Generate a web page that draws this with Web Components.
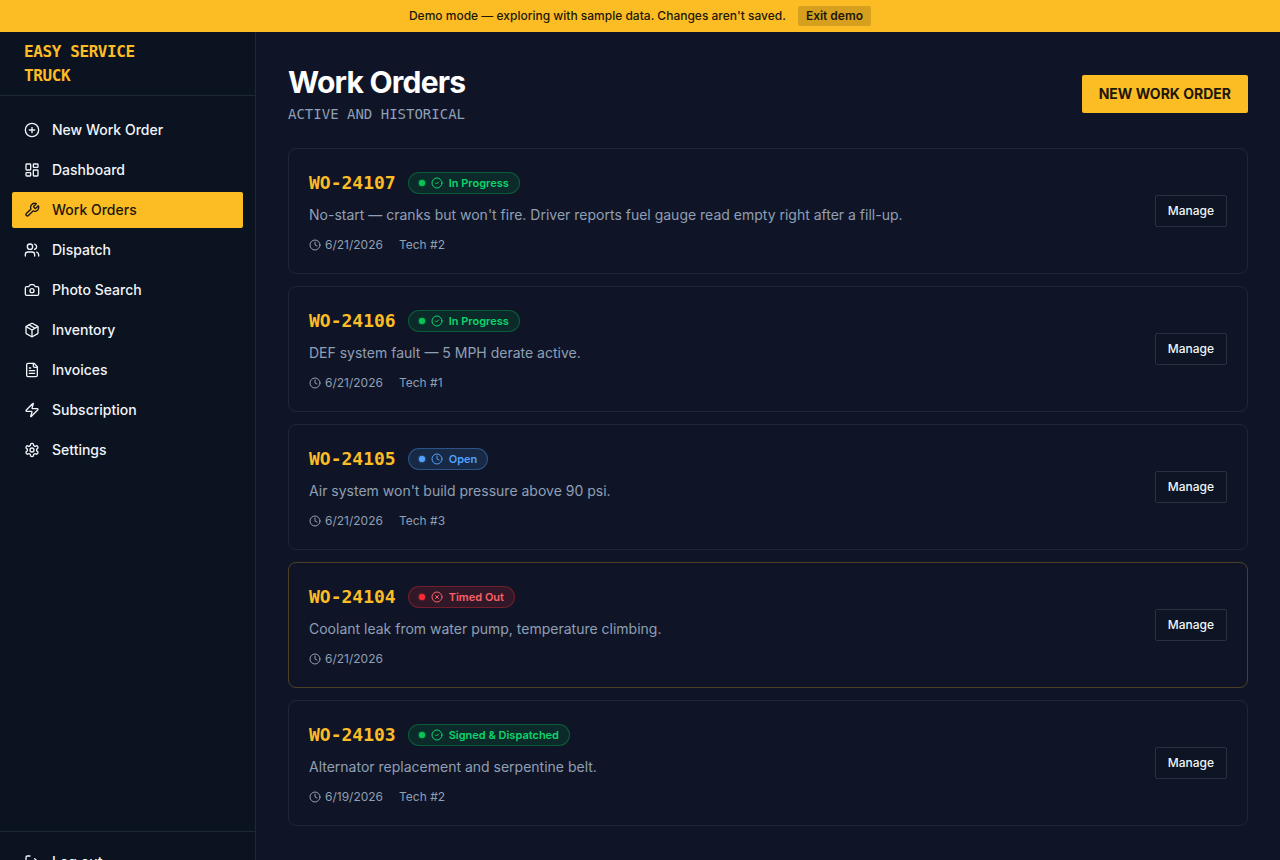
<!DOCTYPE html>
<html lang="en">
<head>
<meta charset="utf-8">
<title>Easy Service Truck - Work Orders</title>
<style>
  :root {
    --bg: #0f1526;
    --sidebar: #0b1220;
    --line: #1e2739;
    --amber: #fcbd24;
    --ink: #1d1709;
    --text: #f1f5f9;
    --muted: #909fb5;
    --mono: "DejaVu Sans Mono", monospace;
  }
  html, body {
    margin: 0;
    height: 100%;
    overflow: hidden;
    background: var(--bg);
  }
  body {
    font-family: Inter, sans-serif;
    font-size: 14px;
    line-height: 20px;
    color: var(--text);
  }
</style>
</head>
<body>
<service-app></service-app>

<script>
const ICONS = {
  plus: '<circle cx="12" cy="12" r="10"/><path d="M8 12h8M12 8v8"/>',
  dashboard: '<rect width="7" height="9" x="3" y="3" rx="1"/><rect width="7" height="5" x="14" y="3" rx="1"/><rect width="7" height="9" x="14" y="12" rx="1"/><rect width="7" height="5" x="3" y="16" rx="1"/>',
  wrench: '<path d="M14.7 6.3a1 1 0 0 0 0 1.4l1.6 1.6a1 1 0 0 0 1.4 0l3.77-3.77a6 6 0 0 1-7.94 7.94l-6.91 6.91a2.12 2.12 0 0 1-3-3l6.91-6.91a6 6 0 0 1 7.94-7.94l-3.76 3.76z"/>',
  users: '<path d="M16 21v-2a4 4 0 0 0-4-4H6a4 4 0 0 0-4 4v2"/><circle cx="9" cy="7" r="4"/><path d="M22 21v-2a4 4 0 0 0-3-3.87M16 3.13a4 4 0 0 1 0 7.75"/>',
  camera: '<path d="M14.5 4h-5L7 7H4a2 2 0 0 0-2 2v9a2 2 0 0 0 2 2h16a2 2 0 0 0 2-2V9a2 2 0 0 0-2-2h-3l-2.5-3z"/><circle cx="12" cy="13" r="3"/>',
  box: '<path d="M11 21.73a2 2 0 0 0 2 0l7-4A2 2 0 0 0 21 16V8a2 2 0 0 0-1-1.73l-7-4a2 2 0 0 0-2 0l-7 4A2 2 0 0 0 3 8v8a2 2 0 0 0 1 1.73z"/><path d="M12 22V12M3.3 7l8.7 5 8.7-5M7.5 4.27l9 5.15"/>',
  file: '<path d="M15 2H6a2 2 0 0 0-2 2v16a2 2 0 0 0 2 2h12a2 2 0 0 0 2-2V7Z"/><path d="M14 2v4a2 2 0 0 0 2 2h4M10 9H8M16 13H8M16 17H8"/>',
  zap: '<path d="M4 14a1 1 0 0 1-.78-1.63l9.9-10.2a.5.5 0 0 1 .86.46l-1.92 6.02A1 1 0 0 0 13 10h7a1 1 0 0 1 .78 1.63l-9.9 10.2a.5.5 0 0 1-.86-.46l1.92-6.02A1 1 0 0 0 11 14z"/>',
  settings: '<path d="M12.22 2h-.44a2 2 0 0 0-2 2v.18a2 2 0 0 1-1 1.73l-.43.25a2 2 0 0 1-2 0l-.15-.08a2 2 0 0 0-2.73.73l-.22.38a2 2 0 0 0 .73 2.73l.15.1a2 2 0 0 1 1 1.72v.51a2 2 0 0 1-1 1.74l-.15.09a2 2 0 0 0-.73 2.73l.22.38a2 2 0 0 0 2.73.73l.15-.08a2 2 0 0 1 2 0l.43.25a2 2 0 0 1 1 1.73V20a2 2 0 0 0 2 2h.44a2 2 0 0 0 2-2v-.18a2 2 0 0 1 1-1.73l.43-.25a2 2 0 0 1 2 0l.15.08a2 2 0 0 0 2.73-.73l.22-.39a2 2 0 0 0-.73-2.73l-.15-.08a2 2 0 0 1-1-1.74v-.5a2 2 0 0 1 1-1.74l.15-.09a2 2 0 0 0 .73-2.73l-.22-.38a2 2 0 0 0-2.73-.73l-.15.08a2 2 0 0 1-2 0l-.43-.25a2 2 0 0 1-1-1.73V4a2 2 0 0 0-2-2z"/><circle cx="12" cy="12" r="3"/>',
  logout: '<path d="M9 21H5a2 2 0 0 1-2-2V5a2 2 0 0 1 2-2h4M16 17l5-5-5-5M21 12H9"/>',
  clock: '<circle cx="12" cy="12" r="10"/><path d="M12 6v6l4 2"/>',
  check: '<circle cx="12" cy="12" r="10"/><path d="m9 12 2 2 4-4"/>',
  cross: '<circle cx="12" cy="12" r="10"/><path d="m15 9-6 6M9 9l6 6"/>',
};

class AppIcon extends HTMLElement {
  connectedCallback() {
    this.attachShadow({ mode: "open" });
    const size = this.getAttribute("size") || 16;
    this.shadowRoot.innerHTML = `
      <style>
        :host { display: block; flex: none; width: ${size}px; height: ${size}px; }
        svg { display: block; }
      </style>
      <svg width="${size}" height="${size}" viewBox="0 0 24 24" fill="none" stroke="currentColor"
        stroke-width="2" stroke-linecap="round" stroke-linejoin="round">${ICONS[this.getAttribute("name")]}</svg>
    `;
  }
}

class DemoBanner extends HTMLElement {
  connectedCallback() {
    this.attachShadow({ mode: "open" });
    this.shadowRoot.innerHTML = `
      <style>
        :host {
          display: flex;
          align-items: center;
          justify-content: center;
          gap: 12px;
          height: 32px;
          flex: none;
          background: var(--amber);
          color: var(--ink);
          font-size: 12px;
          line-height: 16px;
          font-weight: 500;
        }
        button {
          font: inherit;
          font-weight: 600;
          color: inherit;
          border: 0;
          border-radius: 2px;
          padding: 2px 8px;
          background: rgba(0, 0, 0, 0.15);
        }
      </style>
      <span><slot></slot></span>
      <button>Exit demo</button>
    `;
  }
}

class NavItem extends HTMLElement {
  connectedCallback() {
    this.attachShadow({ mode: "open" });
    this.shadowRoot.innerHTML = `
      <style>
        :host {
          display: flex;
          align-items: center;
          gap: 12px;
          padding: 8px 12px;
          border-radius: 2px;
          font-weight: 500;
        }
        :host([active]) {
          background: var(--amber);
          color: var(--ink);
        }
      </style>
      <app-icon name="${this.getAttribute("icon")}"></app-icon>
      <span><slot></slot></span>
    `;
  }
}

class SideBar extends HTMLElement {
  connectedCallback() {
    this.attachShadow({ mode: "open" });
    // Full viewport height below the banner, so the footer runs past the fold
    this.shadowRoot.innerHTML = `
      <style>
        :host {
          display: flex;
          flex-direction: column;
          flex: none;
          box-sizing: border-box;
          width: 256px;
          height: 100vh;
          background: var(--sidebar);
          border-right: 1px solid var(--line);
        }
        header {
          display: flex;
          align-items: center;
          box-sizing: border-box;
          height: 64px;
          padding: 0 24px;
          border-bottom: 1px solid var(--line);
          color: var(--amber);
          font: bold 16px/24px var(--mono);
          letter-spacing: -0.4px;
        }
        header span { width: 150px; }
        nav {
          flex: 1;
          display: flex;
          flex-direction: column;
          gap: 4px;
          padding: 16px 12px;
        }
        footer {
          padding: 12px;
          border-top: 1px solid var(--line);
        }
      </style>
      <header><span>EASY SERVICE TRUCK</span></header>
      <nav>
        <nav-item icon="plus">New Work Order</nav-item>
        <nav-item icon="dashboard">Dashboard</nav-item>
        <nav-item icon="wrench" active>Work Orders</nav-item>
        <nav-item icon="users">Dispatch</nav-item>
        <nav-item icon="camera">Photo Search</nav-item>
        <nav-item icon="box">Inventory</nav-item>
        <nav-item icon="file">Invoices</nav-item>
        <nav-item icon="zap">Subscription</nav-item>
        <nav-item icon="settings">Settings</nav-item>
      </nav>
      <footer><nav-item icon="logout">Log out</nav-item></footer>
    `;
  }
}

class StatusBadge extends HTMLElement {
  connectedCallback() {
    this.attachShadow({ mode: "open" });
    const icons = { green: "check", blue: "clock", red: "cross" };
    this.shadowRoot.innerHTML = `
      <style>
        :host {
          display: flex;
          align-items: center;
          gap: 6px;
          box-sizing: border-box;
          height: 22px;
          padding: 0 10px;
          border: 1px solid var(--edge);
          border-radius: 11px;
          background: var(--fill);
          color: var(--tone);
          font-size: 11px;
          line-height: 16px;
          font-weight: 600;
        }
        :host([tone="green"]) { --tone: #0bd56c; --dot: #06c755; --fill: rgba(0, 201, 80, 0.12); --edge: rgba(0, 201, 80, 0.32); }
        :host([tone="blue"]) { --tone: #51a2ff; --dot: #51a2ff; --fill: rgba(81, 162, 255, 0.15); --edge: rgba(81, 162, 255, 0.35); }
        :host([tone="red"]) { --tone: #fb6068; --dot: #fb2c36; --fill: rgba(251, 44, 54, 0.15); --edge: rgba(251, 44, 54, 0.32); }
        i {
          width: 6px;
          height: 6px;
          border-radius: 50%;
          background: var(--dot);
          box-shadow: 0 0 2px var(--dot);
        }
      </style>
      <i></i>
      <app-icon name="${icons[this.getAttribute("tone")]}" size="12"></app-icon>
      <span><slot></slot></span>
    `;
  }
}

class WorkOrder extends HTMLElement {
  connectedCallback() {
    this.attachShadow({ mode: "open" });
    const tech = this.getAttribute("tech");
    this.shadowRoot.innerHTML = `
      <style>
        :host {
          display: flex;
          align-items: center;
          justify-content: space-between;
          padding: 20px;
          border: 1px solid var(--line);
          border-radius: 8px;
        }
        :host([flagged]) { border-color: #4a4127; }
        .title {
          display: flex;
          align-items: center;
          gap: 12px;
        }
        h2 {
          margin: 0;
          font: bold 18px/28px var(--mono);
          color: var(--amber);
        }
        p {
          margin: 8px 0 12px;
          color: var(--muted);
        }
        .meta {
          display: flex;
          gap: 16px;
          font-size: 12px;
          line-height: 16px;
          color: var(--muted);
        }
        .date {
          display: flex;
          align-items: center;
          gap: 4px;
        }
        button {
          box-sizing: border-box;
          height: 32px;
          padding: 0 12px;
          border: 1px solid #273142;
          border-radius: 2px;
          background: #0d1524;
          color: var(--text);
          font: 500 12px/16px Inter, sans-serif;
        }
      </style>
      <div>
        <div class="title">
          <h2>${this.getAttribute("number")}</h2>
          <status-badge tone="${this.getAttribute("tone")}">${this.getAttribute("status")}</status-badge>
        </div>
        <p><slot></slot></p>
        <div class="meta">
          <span class="date"><app-icon name="clock" size="12"></app-icon>${this.getAttribute("date")}</span>
          ${tech ? `<span>Tech #${tech}</span>` : ""}
        </div>
      </div>
      <button>Manage</button>
    `;
  }
}

class WorkOrdersPage extends HTMLElement {
  connectedCallback() {
    this.attachShadow({ mode: "open" });
    this.shadowRoot.innerHTML = `
      <style>
        :host {
          display: flex;
          flex-direction: column;
          gap: 24px;
          flex: 1;
          padding: 32px;
        }
        header {
          display: flex;
          align-items: center;
          justify-content: space-between;
        }
        h1 {
          margin: 0 0 4px;
          font-size: 30px;
          line-height: 36px;
          font-weight: 700;
          letter-spacing: -0.75px;
          color: #fff;
        }
        header p {
          margin: 0;
          font-family: var(--mono);
          color: var(--muted);
        }
        header button {
          height: 38px;
          padding: 0 17px;
          border: 0;
          border-radius: 2px;
          background: var(--amber);
          color: var(--ink);
          font: 700 14px/20px Inter, sans-serif;
        }
        .list {
          display: flex;
          flex-direction: column;
          gap: 12px;
        }
      </style>
      <header>
        <div>
          <h1>Work Orders</h1>
          <p>ACTIVE AND HISTORICAL</p>
        </div>
        <button>NEW WORK ORDER</button>
      </header>
      <div class="list">
        <work-order number="WO-24107" tone="green" status="In Progress" date="6/21/2026" tech="2">No-start — cranks but won't fire. Driver reports fuel gauge read empty right after a fill-up.</work-order>
        <work-order number="WO-24106" tone="green" status="In Progress" date="6/21/2026" tech="1">DEF system fault — 5 MPH derate active.</work-order>
        <work-order number="WO-24105" tone="blue" status="Open" date="6/21/2026" tech="3">Air system won't build pressure above 90 psi.</work-order>
        <work-order number="WO-24104" tone="red" status="Timed Out" date="6/21/2026" flagged>Coolant leak from water pump, temperature climbing.</work-order>
        <work-order number="WO-24103" tone="green" status="Signed &amp; Dispatched" date="6/19/2026" tech="2">Alternator replacement and serpentine belt.</work-order>
      </div>
    `;
  }
}

class ServiceApp extends HTMLElement {
  connectedCallback() {
    this.attachShadow({ mode: "open" });
    this.shadowRoot.innerHTML = `
      <style>
        :host { display: flex; flex-direction: column; }
        .body { display: flex; align-items: flex-start; }
      </style>
      <demo-banner>Demo mode — exploring with sample data. Changes aren't saved.</demo-banner>
      <div class="body">
        <side-bar></side-bar>
        <work-orders-page></work-orders-page>
      </div>
    `;
  }
}

customElements.define("app-icon", AppIcon);
customElements.define("demo-banner", DemoBanner);
customElements.define("nav-item", NavItem);
customElements.define("side-bar", SideBar);
customElements.define("status-badge", StatusBadge);
customElements.define("work-order", WorkOrder);
customElements.define("work-orders-page", WorkOrdersPage);
customElements.define("service-app", ServiceApp);
</script>
</body>
</html>
